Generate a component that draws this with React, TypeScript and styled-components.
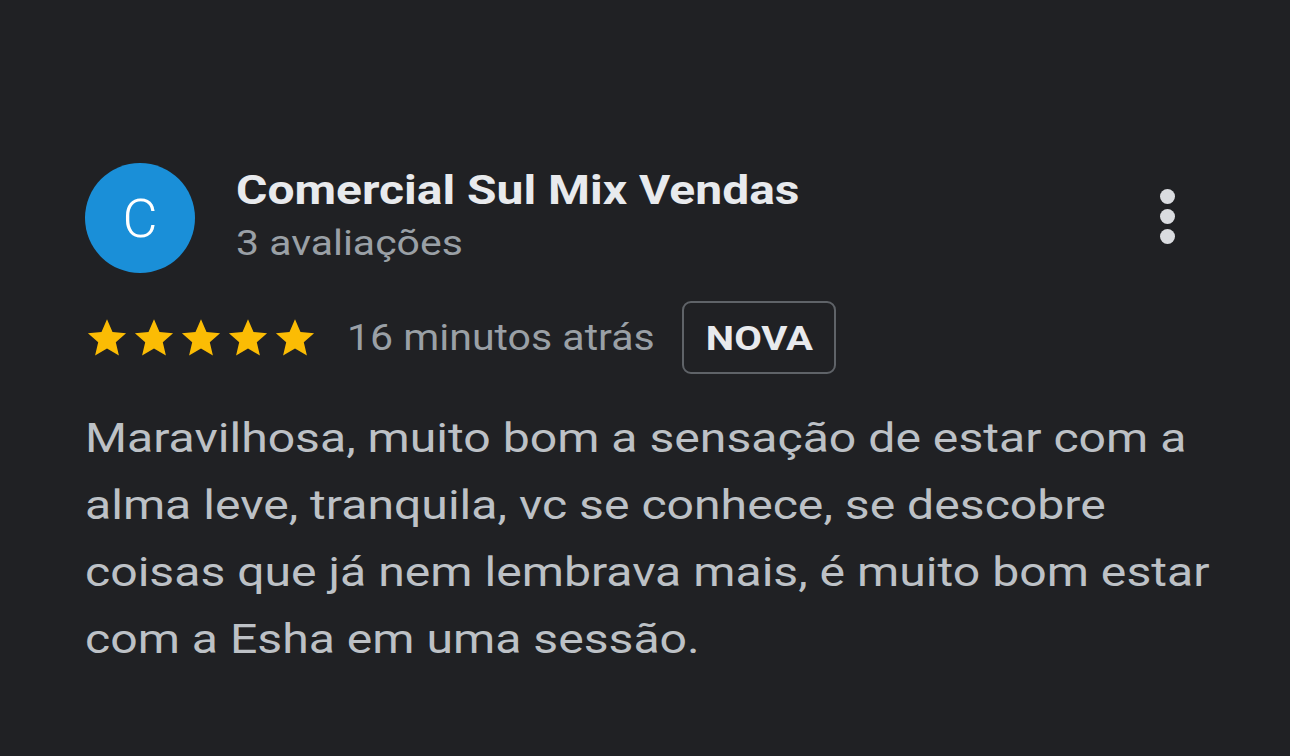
import React from "react";
import styled, { createGlobalStyle } from "styled-components";

const GlobalStyle = createGlobalStyle`
  html, body {
    margin: 0;
    padding: 0;
    background: #202124;
  }
  body {
    font-family: Roboto, "Liberation Sans", sans-serif;
  }
`;

// the app font renders wider than Roboto, so text runs are widened a little
const Wide = styled.span<{ $x: number; $origin?: string }>`
  display: inline-block;
  white-space: nowrap;
  transform: scaleX(${(p) => p.$x});
  transform-origin: ${(p) => p.$origin || "left center"};
`;

const Page = styled.div`
  width: 1290px;
  height: 756px;
  box-sizing: border-box;
  padding: 163px 0 0 85px;
  background: #202124;
`;

const Card = styled.div`
  width: 1130px;
  display: flex;
  flex-direction: column;
`;

const Header = styled.div`
  display: flex;
  align-items: flex-start;
`;

const Avatar = styled.div`
  width: 110px;
  height: 110px;
  border-radius: 50%;
  background: #1a8fd8;
  color: #ffffff;
  display: flex;
  align-items: center;
  justify-content: center;
  font-size: 54px;
  font-weight: 300;
  flex-shrink: 0;
`;

const Who = styled.div`
  display: flex;
  flex-direction: column;
  margin-left: 41px;
  padding-top: 3px;
  flex: 1;
`;

const Name = styled.div`
  color: #e8eaed;
  font-size: 41px;
  font-weight: 700;
  line-height: 48px;
`;

const Count = styled.div`
  color: #9aa0a6;
  font-size: 35px;
  line-height: 48px;
  margin-top: 6px;
`;

const MoreButton = styled.div`
  width: 40px;
  display: flex;
  flex-direction: column;
  align-items: center;
  gap: 5px;
  padding-top: 26px;
  margin-right: 28px;
`;

const Dot = styled.span`
  width: 15px;
  height: 15px;
  border-radius: 50%;
  background: #dadce0;
`;

const Meta = styled.div`
  display: flex;
  align-items: center;
  margin-top: 28px;
`;

const Stars = styled.div`
  display: flex;
  gap: 3px;
`;

const Ago = styled.div`
  color: #9aa0a6;
  font-size: 36px;
  margin-left: 30px;
  width: 305px;
`;

const Badge = styled.div`
  margin-left: 30px;
  width: 154px;
  height: 73px;
  box-sizing: border-box;
  border: 2px solid #5f6368;
  border-radius: 9px;
  display: flex;
  align-items: center;
  justify-content: center;
  color: #e8eaed;
  font-size: 34px;
  font-weight: 700;
`;

const Body = styled.div`
  margin-top: 30px;
  color: #bdc1c6;
  font-size: 41.5px;
  line-height: 67px;
  display: flex;
  flex-direction: column;
  align-items: flex-start;
`;

const Star = () => (
  <svg width="44" height="44" viewBox="0 0 24 24">
    <path
      fill="#fbbc04"
      d="M12 1.8l3 6.9 7.4.7-5.6 4.9 1.7 7.3L12 17.7l-6.5 3.9 1.7-7.3L1.6 9.4 9 8.7z"
    />
  </svg>
);

const lines = [
  "Maravilhosa, muito bom a sensação de estar com a",
  "alma leve, tranquila, vc se conhece, se descobre",
  "coisas que já nem lembrava mais, é muito bom estar",
  "com a Esha em uma sessão.",
];

const App = () => {
  return (
    <Page>
      <GlobalStyle />
      <Card>
        <Header>
          <Avatar>C</Avatar>
          <Who>
            <Name>
              <Wide $x={1.17}>Comercial Sul Mix Vendas</Wide>
            </Name>
            <Count>
              <Wide $x={1.17}>3 avaliações</Wide>
            </Count>
          </Who>
          <MoreButton>
            <Dot />
            <Dot />
            <Dot />
          </MoreButton>
        </Header>
        <Meta>
          <Stars>
            {[0, 1, 2, 3, 4].map((i) => (
              <Star key={i} />
            ))}
          </Stars>
          <Ago>
            <Wide $x={1.14}>16 minutos atrás</Wide>
          </Ago>
          <Badge>
            <Wide $x={1.18} $origin="center">
              NOVA
            </Wide>
          </Badge>
        </Meta>
        <Body>
          {lines.map((l) => (
            <Wide key={l} $x={1.16}>
              {l}
            </Wide>
          ))}
        </Body>
      </Card>
    </Page>
  );
};

export default App;
